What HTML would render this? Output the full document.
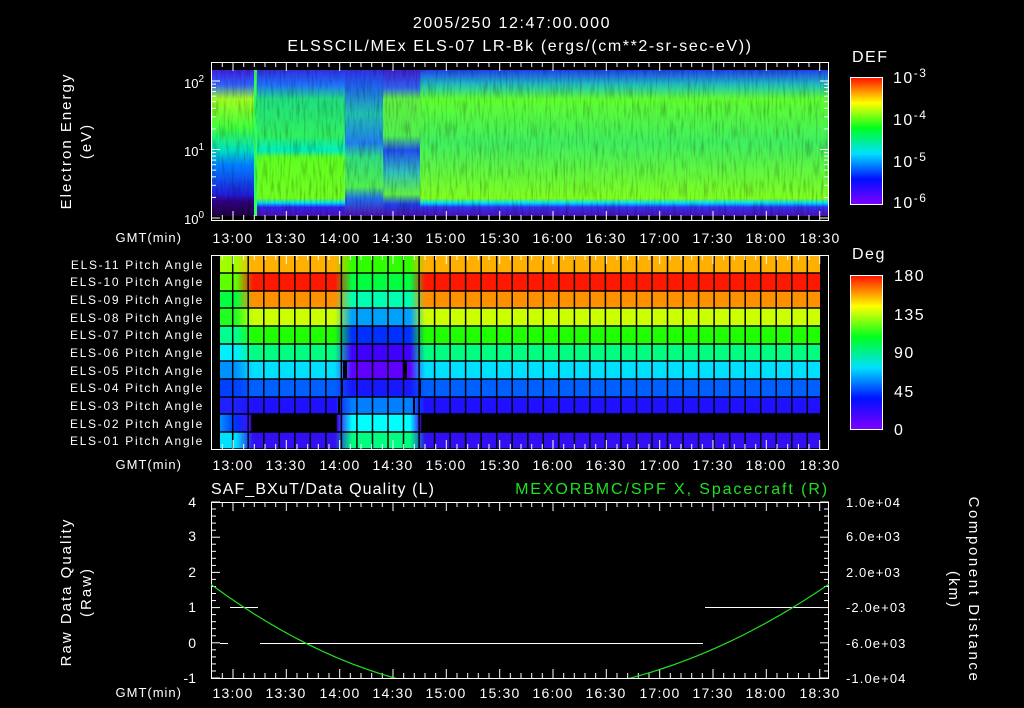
<!DOCTYPE html>
<html><head><meta charset="utf-8"><style>
html,body{margin:0;padding:0;background:#000;width:1024px;height:708px;overflow:hidden}
svg{display:block}
text{font-family:"Liberation Sans",sans-serif;fill:#fff}
.t{font-size:16px;letter-spacing:1.6px}
.r{font-size:12px;letter-spacing:1.7px;text-anchor:end}
.tm text{font-size:14px;letter-spacing:1.2px;text-anchor:middle}
.g{font-size:13px;letter-spacing:1px;text-anchor:end}
.cb{font-size:16px;letter-spacing:1.5px}
.vl{font-size:15px;letter-spacing:2px;text-anchor:middle}
</style></head><body>
<svg id="s" width="1024" height="708" xmlns="http://www.w3.org/2000/svg">
<defs>
<linearGradient id="def" x1="0" y1="1" x2="0" y2="0">
<stop offset="0" stop-color="#8000ff"/><stop offset=".2" stop-color="#0010ff"/><stop offset=".4" stop-color="#00e0ff"/><stop offset=".6" stop-color="#00ff20"/><stop offset=".8" stop-color="#ffff00"/><stop offset="1" stop-color="#ff1000"/></linearGradient>
<linearGradient id="sA" x1="0" y1="0" x2="0" y2="1">
<stop offset="0" stop-color="#4020e0"/><stop offset=".1" stop-color="#3060ff"/><stop offset=".2" stop-color="#a0ff20"/><stop offset=".4" stop-color="#40ff40"/><stop offset=".55" stop-color="#00e0c0"/><stop offset=".65" stop-color="#0080ff"/><stop offset=".85" stop-color="#2020e0"/><stop offset=".9" stop-color="#300080"/><stop offset="1" stop-color="#200040"/></linearGradient>
<linearGradient id="sB" x1="0" y1="0" x2="0" y2="1">
<stop offset="0" stop-color="#3030e0"/><stop offset=".1" stop-color="#2070ff"/><stop offset=".2" stop-color="#20e080"/><stop offset=".45" stop-color="#30f060"/><stop offset=".55" stop-color="#00f0c0"/><stop offset=".6" stop-color="#60ff20"/><stop offset=".88" stop-color="#70ff20"/><stop offset=".91" stop-color="#00e0ff"/><stop offset=".94" stop-color="#3020f0"/><stop offset="1" stop-color="#5010b0"/></linearGradient>
<linearGradient id="sC" x1="0" y1="0" x2="0" y2="1">
<stop offset="0" stop-color="#3030e0"/><stop offset=".1" stop-color="#2060f0"/><stop offset=".3" stop-color="#20c0b0"/><stop offset=".5" stop-color="#2080f0"/><stop offset=".6" stop-color="#30e080"/><stop offset=".8" stop-color="#50f050"/><stop offset=".88" stop-color="#2070f0"/><stop offset="1" stop-color="#5010b0"/></linearGradient>
<linearGradient id="sC2" x1="0" y1="0" x2="0" y2="1">
<stop offset="0" stop-color="#4020d0"/><stop offset=".12" stop-color="#3060f0"/><stop offset=".2" stop-color="#60f040"/><stop offset=".45" stop-color="#50f050"/><stop offset=".55" stop-color="#2050f0"/><stop offset=".7" stop-color="#30c0c0"/><stop offset=".85" stop-color="#60f040"/><stop offset=".92" stop-color="#2040f0"/><stop offset="1" stop-color="#5010b0"/></linearGradient>
<linearGradient id="sD" x1="0" y1="0" x2="0" y2="1">
<stop offset="0" stop-color="#2040f0"/><stop offset=".1" stop-color="#20c0c0"/><stop offset=".2" stop-color="#60ff30"/><stop offset=".5" stop-color="#40f060"/><stop offset=".88" stop-color="#80ff20"/><stop offset=".91" stop-color="#00e0ff"/><stop offset=".94" stop-color="#3030f0"/><stop offset="1" stop-color="#5010b0"/></linearGradient>
<clipPath id="cb"><rect x="211" y="502" width="618" height="176"/></clipPath>
<filter id="nz" x="0" y="0" width="100%" height="100%"><feTurbulence type="fractalNoise" baseFrequency="0.5 0.05" numOctaves="2" seed="3"/><feColorMatrix values="0 0 0 0 0  0 0 0 0 0  0 0 0 0 0  0 0 0 1.2 -0.55"/></filter>
</defs>
<rect width="1024" height="708" fill="#000"/>
<text class="t" x="512" y="28" text-anchor="middle">2005/250 12:47:00.000</text>
<text class="t" x="520" y="51" text-anchor="middle">ELSSCIL/MEx ELS-07 LR-Bk  (ergs/(cm**2-sr-sec-eV))</text>

<g>
<rect x="211" y="70" width="45" height="146" fill="url(#sA)"/>
<rect x="256" y="70" width="89" height="146" fill="url(#sB)"/>
<rect x="345" y="70" width="38" height="146" fill="url(#sC)"/>
<rect x="383" y="70" width="37" height="146" fill="url(#sC2)"/>
<rect x="420" y="70" width="409" height="146" fill="url(#sD)"/>
<rect x="254" y="70" width="3" height="146" fill="#30ff60"/>
<rect x="211" y="70" width="618" height="146" filter="url(#nz)" opacity=".5"/>
</g>
<g id="pa"></g>
<g id="ticks" stroke="#fff" stroke-width="1" fill="none"></g>

<text x="852" y="62" style="font-size:16px;letter-spacing:1.5px">DEF</text>
<rect x="850.5" y="77.5" width="32" height="127" fill="url(#def)" stroke="#fff"/>
<text x="893" y="83" class="cb">10<tspan dy="-6" font-size="12">-3</tspan></text>
<text x="893" y="125" class="cb">10<tspan dy="-6" font-size="12">-4</tspan></text>
<text x="893" y="167" class="cb">10<tspan dy="-6" font-size="12">-5</tspan></text>
<text x="893" y="208" class="cb">10<tspan dy="-6" font-size="12">-6</tspan></text>

<text x="852" y="259" style="font-size:16px;letter-spacing:1.5px">Deg</text>
<rect x="850.5" y="275.5" width="32" height="154" fill="url(#def)" stroke="#fff"/>
<text x="894" y="281" class="cb">180</text>
<text x="894" y="320" class="cb">135</text>
<text x="894" y="358" class="cb">90</text>
<text x="894" y="397" class="cb">45</text>
<text x="894" y="435" class="cb">0</text>

<text x="204" y="88" style="font-size:13px" text-anchor="end">10<tspan dy="-6" font-size="10">2</tspan></text>
<text x="204" y="156" style="font-size:13px" text-anchor="end">10<tspan dy="-6" font-size="10">1</tspan></text>
<text x="204" y="224" style="font-size:13px" text-anchor="end">10<tspan dy="-6" font-size="10">0</tspan></text>
<text class="vl" transform="translate(71,141) rotate(-90)">Electron Energy</text>
<text class="vl" transform="translate(91,141) rotate(-90)">(eV)</text>

<text class="r" x="204" y="269">ELS-11 Pitch Angle</text>
<text class="r" x="204" y="286">ELS-10 Pitch Angle</text>
<text class="r" x="204" y="304">ELS-09 Pitch Angle</text>
<text class="r" x="204" y="322">ELS-08 Pitch Angle</text>
<text class="r" x="204" y="339">ELS-07 Pitch Angle</text>
<text class="r" x="204" y="357">ELS-06 Pitch Angle</text>
<text class="r" x="204" y="375">ELS-05 Pitch Angle</text>
<text class="r" x="204" y="392">ELS-04 Pitch Angle</text>
<text class="r" x="204" y="410">ELS-03 Pitch Angle</text>
<text class="r" x="204" y="428">ELS-02 Pitch Angle</text>
<text class="r" x="204" y="445">ELS-01 Pitch Angle</text>

<text class="g" x="182" y="242">GMT(min)</text>
<text class="g" x="182" y="469">GMT(min)</text>
<text class="g" x="182" y="697">GMT(min)</text>

<g class="tm">
<text x="233" y="243">13:00</text><text x="286" y="243">13:30</text><text x="340" y="243">14:00</text><text x="393" y="243">14:30</text><text x="446" y="243">15:00</text><text x="500" y="243">15:30</text><text x="553" y="243">16:00</text><text x="606" y="243">16:30</text><text x="660" y="243">17:00</text><text x="713" y="243">17:30</text><text x="766" y="243">18:00</text><text x="820" y="243">18:30</text>
<text x="233" y="470">13:00</text><text x="286" y="470">13:30</text><text x="340" y="470">14:00</text><text x="393" y="470">14:30</text><text x="446" y="470">15:00</text><text x="500" y="470">15:30</text><text x="553" y="470">16:00</text><text x="606" y="470">16:30</text><text x="660" y="470">17:00</text><text x="713" y="470">17:30</text><text x="766" y="470">18:00</text><text x="820" y="470">18:30</text>
<text x="233" y="698">13:00</text><text x="286" y="698">13:30</text><text x="340" y="698">14:00</text><text x="393" y="698">14:30</text><text x="446" y="698">15:00</text><text x="500" y="698">15:30</text><text x="553" y="698">16:00</text><text x="606" y="698">16:30</text><text x="660" y="698">17:00</text><text x="713" y="698">17:30</text><text x="766" y="698">18:00</text><text x="820" y="698">18:30</text>
</g>

<text x="211" y="494" style="font-size:16px;letter-spacing:1.1px">SAF_BXuT/Data Quality (L)</text>
<text x="829" y="494" style="font-size:16px;letter-spacing:1.9px;fill:#20e020" text-anchor="end">MEXORBMC/SPF X, Spacecraft (R)</text>
<g style="font-size:14px" text-anchor="end">
<text x="196" y="507">4</text><text x="196" y="541">3</text><text x="196" y="577">2</text><text x="196" y="612">1</text><text x="196" y="648">0</text><text x="196" y="683">-1</text>
</g>
<g style="font-size:13px;letter-spacing:1.1px">
<text x="846" y="507">1.0e+04</text><text x="846" y="541">6.0e+03</text><text x="846" y="577">2.0e+03</text><text x="846" y="612">-2.0e+03</text><text x="846" y="648">-6.0e+03</text><text x="846" y="683">-1.0e+04</text>
</g>
<text class="vl" transform="translate(71,592) rotate(-90)">Raw Data Quality</text>
<text class="vl" transform="translate(91,592) rotate(-90)">(Raw)</text>
<text class="vl" style="letter-spacing:2.6px" transform="translate(969,590) rotate(90)">Component Distance</text>
<text class="vl" transform="translate(949,590) rotate(90)">(km)</text>

<g stroke="#fff" stroke-width="1">
<line x1="230" y1="607.5" x2="258" y2="607.5"/>
<line x1="220" y1="643.5" x2="228" y2="643.5"/>
<line x1="260" y1="643.5" x2="703" y2="643.5"/>
<line x1="705" y1="607.5" x2="820" y2="607.5"/>
</g>
<path id="cv" clip-path="url(#cb)" stroke="#20e020" stroke-width="1.2" fill="none"/>
</svg>
<script>
var NS="http://www.w3.org/2000/svg";
function el(p,n,a){var e=document.createElementNS(NS,n);for(var k in a)e.setAttribute(k,a[k]);p.appendChild(e);return e;}
var d="";for(var x=211;x<=829;x+=3){var dx=x-508;var a=dx<0?0.001243:0.001067;var y=694-a*dx*dx;d+=(x==211?"M":"L")+x+" "+y.toFixed(1);}
document.getElementById("cv").setAttribute("d",d);
var pa=document.getElementById("pa");
var defs=document.querySelector("defs");
var rowTops=[255,273,291,308,326,344,361,379,397,414,432,449];
var rows=[
["#a0ff00","#ffb000","#30ff00"],
["#60ff00","#ff1800","#00ff40"],
["#00ff40","#ff9000","#00ffb0"],
["#20ff20","#ccff00","#00a0ff"],
["#00ff90","#20ff00","#0030ff"],
["#00f0ff","#00ff80","#4000ff"],
["#0090ff","#00e0ff","#6000ff"],
["#0040ff","#0060ff","#1818ff"],
["#2020ff","#2010ff","#0080ff"],
["#0090ff","#000000","#00ffff"],
["#00e0ff","#3010f0","#00ff80"]];
var X0=220,X1=820,W=X1-X0;
function off(x){return ((x-X0)/W).toFixed(4);}
rows.forEach(function(r,i){
 var g=el(defs,"linearGradient",{id:"pg"+i,x1:"0",y1:"0",x2:"1",y2:"0"});
 var stops=[[220,r[0]],[236,r[0]],[253,r[1]],[335,r[1]],[352,r[2]],[410,r[2]],[425,r[1]],[820,r[1]]];
 if(i==9){stops=[[220,r[0]],[236,"#0030ff"],[250,"#4010ff"],[252,"#000"],[336,"#000"],[338,"#4010ff"],[352,r[2]],[410,r[2]],[420,"#4010ff"],[422,"#000"],[820,"#000"]];}
 stops.forEach(function(s){el(g,"stop",{offset:off(s[0]),"stop-color":s[1]});});
 el(pa,"rect",{x:X0,y:rowTops[i],width:W,height:rowTops[i+1]-rowTops[i],fill:"url(#pg"+i+")"});
});
[[343,361,4],[403,361,4],[341,379,2],[419,379,2],[338,397,2],[413,397,2]].forEach(function(s){el(pa,"rect",{x:s[0],y:s[1],width:s[2],height:17,fill:"#000"});});
for(var x=232.7;x<822;x+=15.53){el(pa,"line",{x1:x.toFixed(1),y1:255,x2:x.toFixed(1),y2:449,stroke:"#000","stroke-width":1.5});}
rowTops.forEach(function(y){el(pa,"line",{x1:X0,y1:y,x2:X1,y2:y,stroke:"#000","stroke-width":1.5});});
var tk=document.getElementById("ticks");
function frame(y0,y1){el(tk,"rect",{x:211.5,y:y0+.5,width:617,height:y1-y0});
 for(var k=0;k<=60;k++){var x=233-2*10.667+k*10.667; if(x<212||x>828)continue;
  var maj=Math.abs(((x-233)/53.33)-Math.round((x-233)/53.33))<0.02; var L=maj?9:5;
  el(tk,"line",{x1:x.toFixed(1),y1:y0,x2:x.toFixed(1),y2:y0+L});el(tk,"line",{x1:x.toFixed(1),y1:y1,x2:x.toFixed(1),y2:y1-L});}}
frame(62,220);frame(255,449);frame(502,678);
for(var dec=0;dec<3;dec++){for(var m=1;m<10;m++){var y=218-68.5*(dec+Math.log10(m));if(y<63)break;var L=m==1?9:5;
 el(tk,"line",{x1:211,y1:y.toFixed(1),x2:211+L,y2:y.toFixed(1)});el(tk,"line",{x1:829,y1:y.toFixed(1),x2:829-L,y2:y.toFixed(1)});}}
for(var k=1;k<16;k++){var y=77+k*127/15;el(tk,"line",{x1:882,y1:y.toFixed(1),x2:(k%5==0?872:876),y2:y.toFixed(1)});}
for(var k=1;k<20;k++){var y=275+k*154/20;el(tk,"line",{x1:882,y1:y.toFixed(1),x2:(k%5==0?872:876),y2:y.toFixed(1)});}
for(var k=0;k<=25;k++){var y=502+k*176/25;var L=k%5==0?9:5;
 el(tk,"line",{x1:211,y1:y.toFixed(1),x2:211+L,y2:y.toFixed(1)});el(tk,"line",{x1:829,y1:y.toFixed(1),x2:829-L,y2:y.toFixed(1)});}
</script>
</body></html>
